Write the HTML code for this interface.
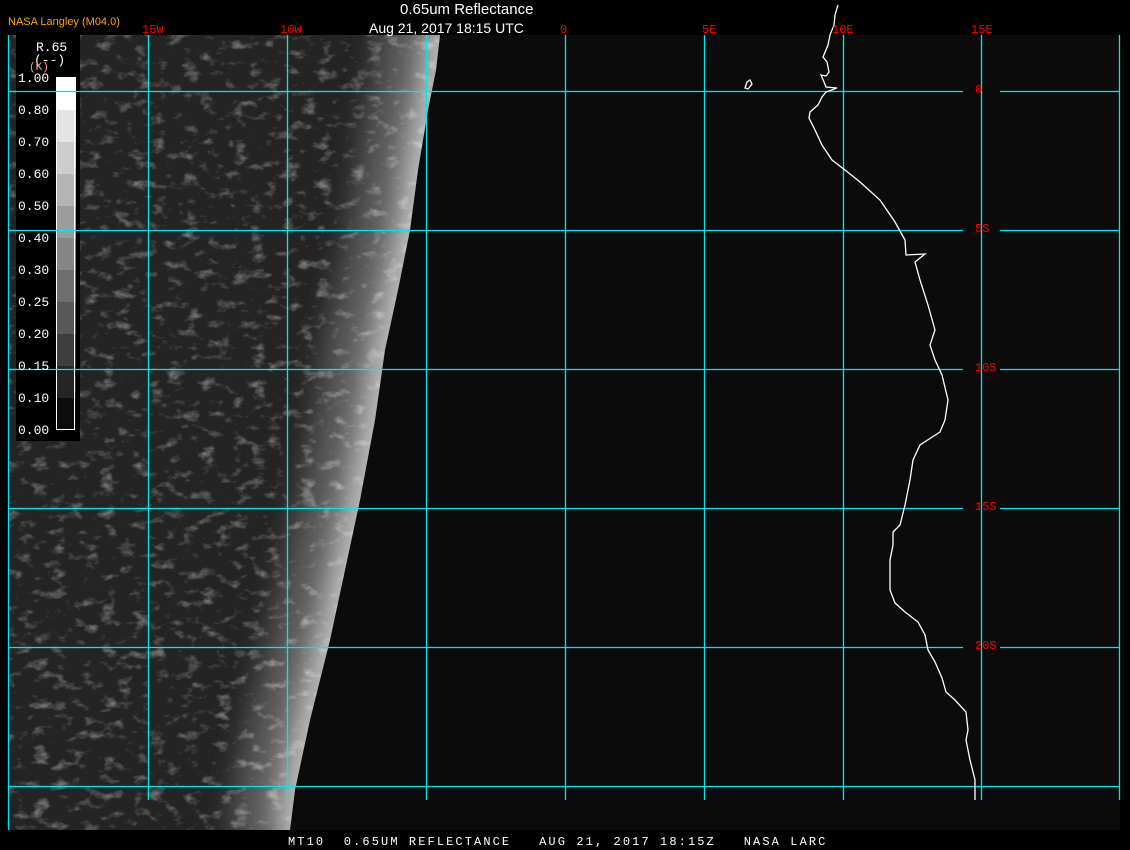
<!DOCTYPE html>
<html><head><style>
body{margin:0;background:#000;width:1130px;height:850px;overflow:hidden;position:relative;font-family:"Liberation Sans",sans-serif}
.t{position:absolute;white-space:pre}
.m{font-family:"Liberation Mono",monospace}
</style></head><body>
<svg width="1130" height="850" style="position:absolute;left:0;top:0">
<defs>
<filter id="n" x="0" y="0" width="1" height="1"><feTurbulence type="fractalNoise" baseFrequency="0.06 0.1" numOctaves="3" seed="4"/><feColorMatrix type="matrix" values="0 0 0 0 1 0 0 0 0 1 0 0 0 0 1 2.2 0 0 0 -1.2"/></filter>
<filter id="b" filterUnits="userSpaceOnUse" x="0" y="0" width="600" height="900"><feGaussianBlur stdDeviation="14"/></filter>
<clipPath id="c"><polygon points="8,35 440,35 436,70 428,110 418,170 410,230 398,290 385,350 375,420 360,500 345,570 330,640 310,720 295,790 290,830 8,830"/></clipPath>
</defs>
<rect x="8" y="35" width="1112" height="795" fill="#0b0b0b"/>
<g clip-path="url(#c)">
<rect x="8" y="35" width="440" height="800" fill="#242424"/>
<polyline fill="none" stroke="#5a5a5a" stroke-width="120" filter="url(#b)" points="440,20 436,70 428,110 418,170 410,230 398,290 385,350 375,420 360,500 345,570 330,640 310,720 295,790 290,850"/>
<polyline fill="none" stroke="#c0c0c0" stroke-width="40" filter="url(#b)" points="445,20 441,70 433,110 423,170 415,230 403,290 390,350 380,420 365,500 350,570 335,640 315,720 300,790 295,850"/>
<rect x="8" y="35" width="440" height="800" filter="url(#n)" opacity="0.5"/>
</g>
<g stroke="#00e8ee" stroke-width="1.3" fill="none">
<path d="M8.5 35V830M148.5 35V800M287.5 35V800M426.5 35V800M565.5 35V800M704.5 35V800M843.5 35V800M981.5 35V800M1119.5 35V800"/>
<path d="M8 91.5H963M1000 91.5H1120M8 230.5H963M1000 230.5H1120M8 369.5H963M1000 369.5H1120M8 508.5H963M1000 508.5H1120M8 647.5H963M1000 647.5H1120M8 786.5H1120"/>
</g>
<polyline fill="none" stroke="#fff" stroke-width="1.3" points="838,5 835,15 834,25 830,35 828,45 823,57 827,62 829,72 826,76 821,75 824,82 826,87 837,88 826,92 822,97 818,105 810,112 809,118 815,130 822,145 832,160 845,170 860,182 880,200 895,222 905,240 906,255 925,254 915,262 920,280 928,305 935,330 930,345 935,360 942,375 948,400 945,420 940,432 920,445 913,460 910,480 905,505 900,525 893,532 893,545 890,560 890,590 895,603 905,612 918,622 925,635 928,650 935,662 942,678 946,692 955,700 966,712 968,730 966,740 970,760 975,780 975,800"/>
<polygon fill="none" stroke="#fff" stroke-width="1.3" points="745,88 747,82 750,80 752,84 748,89"/>
<rect x="16" y="35" width="64" height="406" fill="#000"/>
<g>
<rect x="56" y="77" width="20" height="33" fill="#fff"/>
<rect x="56" y="110" width="20" height="32" fill="#e4e4e4"/>
<rect x="56" y="142" width="20" height="32" fill="#cdcdcd"/>
<rect x="56" y="174" width="20" height="32" fill="#b4b4b4"/>
<rect x="56" y="206" width="20" height="32" fill="#9c9c9c"/>
<rect x="56" y="238" width="20" height="32" fill="#868686"/>
<rect x="56" y="270" width="20" height="32" fill="#6e6e6e"/>
<rect x="56" y="302" width="20" height="32" fill="#585858"/>
<rect x="56" y="334" width="20" height="32" fill="#3e3e3e"/>
<rect x="56" y="366" width="20" height="32" fill="#252525"/>
<rect x="56" y="398" width="20" height="32" fill="#0c0c0c"/>
<rect x="56.5" y="77.5" width="18" height="352" fill="none" stroke="#fff"/>
</g>
<g stroke="#00e8ee" stroke-width="1.3"><path d="M8 91.5H80M8 230.5H80M8 369.5H80"/></g>
</svg>
<div class="t" style="left:400px;top:1px;color:#fff;font-size:15px">0.65um Reflectance</div>
<div class="t" style="left:369px;top:20px;color:#fff;font-size:14px">Aug 21, 2017 18:15 UTC</div>
<div class="t" style="left:8px;top:16px;color:#ffa500;font-size:11px">NASA Langley (M04.0)</div>
<div class="t m" style="left:142px;top:23px;color:#f00;font-size:12px">15W</div>
<div class="t m" style="left:280px;top:23px;color:#f00;font-size:12px">10W</div>
<div class="t m" style="left:560px;top:23px;color:#f00;font-size:12px">0</div>
<div class="t m" style="left:702px;top:23px;color:#f00;font-size:12px">5E</div>
<div class="t m" style="left:832px;top:23px;color:#f00;font-size:12px">10E</div>
<div class="t m" style="left:971px;top:23px;color:#f00;font-size:12px">15E</div>
<div class="t m" style="left:975px;top:83px;color:#f00;font-size:12px">0</div>
<div class="t m" style="left:975px;top:222px;color:#f00;font-size:12px">5S</div>
<div class="t m" style="left:975px;top:361px;color:#f00;font-size:12px">10S</div>
<div class="t m" style="left:975px;top:500px;color:#f00;font-size:12px">15S</div>
<div class="t m" style="left:975px;top:639px;color:#f00;font-size:12px">20S</div>
<div class="t m" style="left:36px;top:40px;color:#fff;font-size:13px">R.65</div>
<div class="t m" style="left:34px;top:53px;color:#fff;font-size:13px">(--)</div>
<div class="t m" style="left:29px;top:62px;color:#f98;font-size:11px">(K)</div>
<div class="t m" style="left:18px;top:63px;color:#fff;font-size:13px;line-height:32px">1.00
0.80
0.70
0.60
0.50
0.40
0.30
0.25
0.20
0.15
0.10
0.00</div>
<div class="t m" style="left:288px;top:835px;color:#fff;font-size:12px;letter-spacing:2.1px">MT10  0.65UM REFLECTANCE   AUG 21, 2017 18:15Z   NASA LARC</div>
</body></html>
